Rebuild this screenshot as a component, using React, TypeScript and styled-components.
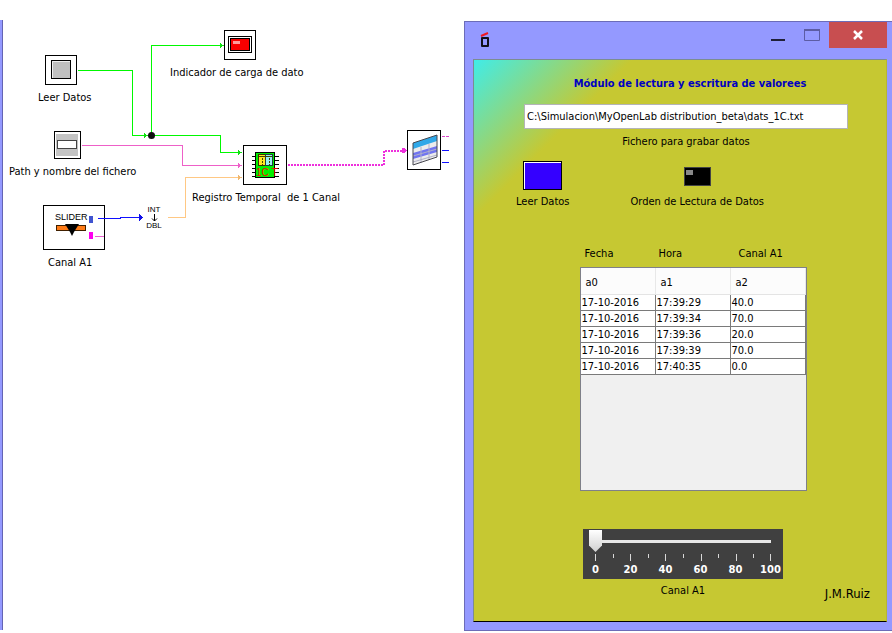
import React, { useState } from "react";
import styled, { createGlobalStyle } from "styled-components";

const GlobalStyle = createGlobalStyle`
  * { box-sizing: border-box; }
  body {
    margin: 0;
    background: #fff;
    color: #000;
    font-family: "DejaVu Sans Condensed", "Noto Sans", sans-serif;
    font-size: 11px;
    line-height: 16px;
  }
`;

const Page = styled.main`
  display: grid;
  grid-template-columns: minmax(464px, 1fr) minmax(428px, 48%);
  min-height: 100vh;
  overflow: hidden;
`;

/* ---------- circuit canvas ---------- */

const Canvas = styled.section`
  position: relative;
  display: flex;
  padding: 20px 0 3px;
`;

const FrameEdge = styled.div`
  width: 3px;
  background: #9499ff;
  border-right: 1px solid #6464b4;
`;

const Wires = styled.svg`
  position: absolute;
  left: 0;
  top: 0;
  display: block;
`;

const Block = styled.div<{ $x: number; $y: number; $w: number; $h: number }>`
  position: absolute;
  left: ${(p) => p.$x}px;
  top: ${(p) => p.$y}px;
  width: ${(p) => p.$w}px;
  height: ${(p) => p.$h}px;
  border: 1px solid #000;
  background: #fff;

  svg { display: block; }
`;

const BlockLabel = styled.div<{ $x: number; $y: number }>`
  position: absolute;
  left: ${(p) => p.$x}px;
  top: ${(p) => p.$y}px;
  white-space: pre;
`;

const Converter = styled.div`
  position: absolute;
  left: 144px;
  top: 206px;
  width: 20px;
  display: flex;
  flex-direction: column;
  align-items: center;
  font-family: "Liberation Sans", sans-serif;
  font-size: 8px;
  line-height: 8px;
`;

const SliderWord = styled.span`
  position: absolute;
  left: 11px;
  top: 6px;
  font-family: "Liberation Sans", sans-serif;
  font-size: 9px;
  line-height: 10px;
`;

/* ---------- front panel window ---------- */

const Window = styled.section`
  margin: 21px 0 2px;
  border: solid #6c6cb8;
  border-width: 1px 0 1px 1px;
  background: #9499ff;
  padding: 0 5px 8px 8px;
  display: flex;
  flex-direction: column;
`;

const TitleBar = styled.header`
  display: flex;
  align-items: flex-start;
  height: 37px;
  padding-left: 7px;

  > svg { margin-top: 9px; }
`;

const TitleButtons = styled.div`
  display: flex;
  margin-left: auto;
`;

const TitleButton = styled.button<{ $close?: boolean }>`
  display: flex;
  align-items: center;
  justify-content: center;
  width: ${(p) => (p.$close ? 58 : 34)}px;
  height: 26px;
  padding: 0;
  border: 0;
  background: ${(p) => (p.$close ? "#c84e50" : "transparent")};
`;

const Form = styled.form`
  flex: 1;
  display: flex;
  flex-direction: column;
  align-items: center;
  padding: 16px 16px 18px 28px;
  border: 1px solid;
  border-color: #7c8c90 #b8b830 #000 #7c8c90;
  background: linear-gradient(135deg, #40ece8 0, #c6c832 112px);
`;

const Heading = styled.h1`
  margin: 0 0 12px 8px;
  font-size: 11px;
  line-height: 16px;
  color: #0000c0;
`;

const PathInput = styled.input`
  width: 88%;
  height: 25px;
  padding: 0 2px;
  border: 1px solid #b4b4b8;
  background: #fff;
  color: #000;
  font: inherit;
`;

const Caption = styled.label`
  display: block;
  text-align: center;
  white-space: nowrap;
`;

const PathCaption = styled(Caption)`
  margin-top: 5px;
`;

const Controls = styled.div`
  display: flex;
  align-self: stretch;
  gap: 61px;
  margin-top: 11px;
  padding-left: 14px;
`;

const Control = styled.div`
  display: flex;
  flex-direction: column;
  align-items: center;
  justify-content: flex-end;
  gap: 4px;
`;

const PushButton = styled.button`
  width: 39px;
  height: 29px;
  padding: 0;
  border: 1px solid #000;
  background: #3400ff;
  box-shadow: inset 1px 1px 0 #fff;
`;

const Led = styled.div`
  width: 27px;
  height: 19px;
  margin-bottom: 4px;
  border: 1px solid #444;
  background: #000;
`;

const Record = styled.div`
  width: 227px;
  margin: 36px 0 38px 14px;
`;

const ColumnNames = styled.div`
  display: grid;
  grid-template-columns: 74px 80px 1fr;
  padding-left: 5px;
  margin-bottom: 5px;
`;

const TableFrame = styled.div`
  height: 224px;
  border: 1px solid #7f8088;
  background: #f0f0f0;
`;

const Table = styled.table`
  width: 100%;
  table-layout: fixed;
  border-collapse: separate;
  border-spacing: 0;
  background: #fff;

  th {
    height: 27px;
    padding: 3px 5px 0;
    border-right: 1px solid #e8e8e8;
    border-bottom: 1px solid #e4e4e4;
    background: #fcfcfc;
    text-align: left;
    font-weight: normal;
  }

  td {
    height: 16px;
    padding: 0 0 0 1px;
    border-right: 1px solid #7a7a7a;
    border-bottom: 1px solid #7a7a7a;
    line-height: 15px;
  }
`;

const SliderPanel = styled.div`
  width: 200px;
  height: 50px;
  margin-right: 6px;
  background: #404040;
`;

const Range = styled.input`
  appearance: none;
  display: block;
  width: 188px;
  height: 24px;
  margin: 0 0 0 6px;
  background: linear-gradient(#e8e8e8, #e8e8e8) 6px 11px / 176px 3px no-repeat;

  &::-webkit-slider-thumb {
    appearance: none;
    width: 13px;
    height: 22px;
    background: linear-gradient(#fff, #d0d0d0);
    clip-path: polygon(0 0, 100% 0, 100% 70%, 50% 100%, 0 70%);
  }
`;

const Scale = styled.svg`
  display: block;
`;

const ScaleNumbers = styled.div`
  display: grid;
  grid-template-columns: repeat(6, 35px);
  margin-left: -5px;
  color: #fff;
  text-align: center;
  font-family: "DejaVu Sans", sans-serif;
  font-size: 10px;
  font-weight: bold;
  line-height: 16px;
`;

const SliderCaption = styled(Caption)`
  margin: 4px 6px 0 0;
`;

const Author = styled.div`
  align-self: flex-end;
  margin-top: -13px;
  font-size: 13px;
  line-height: 16px;
`;

const rows = [
  ["17-10-2016", "17:39:29", "40.0"],
  ["17-10-2016", "17:39:34", "70.0"],
  ["17-10-2016", "17:39:36", "20.0"],
  ["17-10-2016", "17:39:39", "70.0"],
  ["17-10-2016", "17:40:35", "0.0"],
];

const pinRows = [8, 12, 16, 20, 24, 28];

function Diagram() {
  return (
    <Canvas aria-label="Circuito">
      <FrameEdge />
      <Wires width="464" height="280" viewBox="0 0 464 280" fill="none" shapeRendering="crispEdges">
        <g stroke="#00f800">
          <path d="M78 70.500H132.500V135.500H220.500V152.500H242" />
          <path d="M151.500 135V45.500H224" />
        </g>
        <path d="M144 133v5l4-2.500zM220 43v5l4-2.500zM238 150v5l4-2.500z" fill="#10e010" />
        <path d="M82 145.500H182.500V165.500H242" stroke="#ee60c8" />
        <path d="M238 163v5l4-2.500z" fill="#ee60c8" />
        <path d="M168 217.500H185.500V177.500H242" stroke="#ffc884" />
        <path d="M238 175v5l4-2.500z" fill="#f0b870" />
        <path d="M288 165H384V151H402" stroke="#ee30dc" strokeWidth="2" strokeDasharray="2 1" />
        <path d="M402 148h2l3 2v1l-3 2h-2z" fill="#ee30dc" />
        <path d="M442 136.500h7" stroke="#d848c8" strokeDasharray="3 1" />
        <path d="M442 150.500h7M442 162.500h7" stroke="#1010ff" />
        <circle cx="151.500" cy="135.500" r="3.500" fill="#101010" shapeRendering="auto" />
      </Wires>

      <Block $x={45} $y={55} $w={32} $h={30}>
        <svg width="30" height="28">
          <rect x="5.500" y="4.500" width="19" height="18" fill="#c0c0c0" stroke="#000" />
          <path d="M6.500 22V5.500H24" fill="none" stroke="#f0f0f0" />
        </svg>
      </Block>
      <BlockLabel $x={38} $y={90}>Leer Datos</BlockLabel>

      <Block $x={224} $y={30} $w={32} $h={30}>
        <svg width="30" height="28">
          <rect x="3.500" y="5.500" width="23" height="16" stroke="#000" fill="#fff" />
          <rect x="5.500" y="7.500" width="19" height="12" stroke="#000" fill="#f80000" />
          <rect x="8" y="10" width="7" height="3" fill="#ff9c9c" />
        </svg>
      </Block>
      <BlockLabel $x={170} $y={65}>Indicador de carga de dato</BlockLabel>

      <Block $x={54} $y={131} $w={27} $h={28}>
        <svg width="25" height="26">
          <rect x="1" y="2" width="22" height="22" fill="#c4c4c4" />
          <rect x="2.500" y="8.500" width="19" height="8" fill="#fff" stroke="#444" />
        </svg>
      </Block>
      <BlockLabel $x={9} $y={164}>Path y nombre del fichero</BlockLabel>

      <Block $x={43} $y={205} $w={62} $h={45}>
        <svg width="60" height="43">
          <rect x="12.500" y="19.500" width="29" height="5" fill="#ff7c18" stroke="#402000" />
          <path d="M21 18h14l-5 8-2 4-2-4z" fill="#000" />
          <rect x="45" y="10" width="4" height="7" fill="#4054d0" />
          <rect x="45" y="26" width="4" height="7" fill="#ff00f0" />
          <path d="M51 30.500h9" stroke="#e860d0" />
        </svg>
        <SliderWord>SLIDER</SliderWord>
      </Block>
      <Wires width="150" height="280" viewBox="0 0 150 280" shapeRendering="crispEdges">
        <path d="M98 218.500H120V217.500H140" fill="none" stroke="#1010ff" />
        <path d="M139 214v7l4-3.500z" fill="#1010e8" />
      </Wires>
      <BlockLabel $x={48} $y={255}>Canal A1</BlockLabel>

      <Converter>
        <span>INT</span>
        <svg width="7" height="8">
          <path d="M3.500 0V7M1 4.500L3.500 7 6 4.500" fill="none" stroke="#000" />
        </svg>
        <span>DBL</span>
      </Converter>

      <Block $x={243} $y={145} $w={44} $h={40}>
        <svg width="42" height="38" shapeRendering="crispEdges">
          {pinRows.map((y) => (
            <path key={y} d={`M8 ${y + 2}.500h4M31 ${y + 2}.500h4`} stroke="#000" />
          ))}
          <rect x="11.500" y="6.500" width="19" height="25" fill="#00f000" stroke="#000" />
          <rect x="14.500" y="8.500" width="7" height="11" fill="#ffe820" stroke="#403000" />
          <rect x="21.500" y="8.500" width="7" height="11" fill="#98f0f0" stroke="#204040" />
          <path d="M15 10.500h13" stroke="#404000" />
          <path d="M18.500 12v7M25.500 12v7" stroke="#404000" strokeDasharray="2 1" />
          <text x="12" y="30" fontFamily="Liberation Sans" fontSize="10" fill="#ff0000">1C T</text>
        </svg>
      </Block>
      <BlockLabel $x={192} $y={190}>{"Registro Temporal  de 1 Canal"}</BlockLabel>

      <Block $x={407} $y={130} $w={34} $h={40}>
        <svg width="32" height="38">
          <path d="M5 12L29 4V26L5 34Z" fill="#ececec" />
          <path d="M5 12L29 4v6L5 18Z" fill="#30a8e8" />
          <path d="M5 22l24-7v6L5 28Z" fill="#7074f0" />
          <path d="M5 25l24-7M5 31l24-7M13 16v16M21 13v16" stroke="#b0b0c8" fill="none" />
          <path d="M5 12L29 4V26L5 34Z" fill="none" stroke="#484850" />
        </svg>
      </Block>
    </Canvas>
  );
}

export default function App() {
  const [path, setPath] = useState("C:\\Simulacion\\MyOpenLab distribution_beta\\dats_1C.txt");
  const [level, setLevel] = useState(0);

  return (
    <Page>
      <GlobalStyle />
      <Diagram />
      <Window>
        <TitleBar>
          <svg width="11" height="18" fill="none">
            <path d="M1 5L8 2" stroke="#f01820" strokeWidth="2" />
            <path d="M2 7H8V15H2Z" stroke="#101018" strokeWidth="2" strokeLinejoin="round" />
          </svg>
          <TitleButtons>
            <TitleButton type="button" aria-label="Minimizar">
              <svg width="16" height="16"><path d="M1 13h14" stroke="#202038" strokeWidth="2" /></svg>
            </TitleButton>
            <TitleButton type="button" aria-label="Maximizar">
              <svg width="16" height="14" fill="none" stroke="#5c5ca4">
                <path d="M.5 2.500v10h15v-10" />
                <path d="M0 2h16" strokeWidth="2" />
              </svg>
            </TitleButton>
            <TitleButton type="button" aria-label="Cerrar" $close>
              <svg width="12" height="10"><path d="M2 1l8 8M10 1l-8 8" stroke="#fff" strokeWidth="2.500" /></svg>
            </TitleButton>
          </TitleButtons>
        </TitleBar>

        <Form onSubmit={(e) => e.preventDefault()}>
          <Heading>Módulo de lectura y escritura de valorees</Heading>
          <PathInput id="path" value={path} onChange={(e) => setPath(e.target.value)} />
          <PathCaption htmlFor="path">Fichero para grabar datos</PathCaption>

          <Controls>
            <Control>
              <PushButton id="read" type="button" />
              <Caption htmlFor="read">Leer Datos</Caption>
            </Control>
            <Control>
              <Led>
                <svg width="25" height="17"><rect x="1" y="2" width="7" height="5" fill="#888" /></svg>
              </Led>
              <Caption as="span">Orden de Lectura de Datos</Caption>
            </Control>
          </Controls>

          <Record>
            <ColumnNames>
              <span>Fecha</span>
              <span>Hora</span>
              <span>Canal A1</span>
            </ColumnNames>
            <TableFrame>
              <Table>
                <thead>
                  <tr><th>a0</th><th>a1</th><th>a2</th></tr>
                </thead>
                <tbody>
                  {rows.map((r) => (
                    <tr key={r[1]}>{r.map((c) => <td key={c}>{c}</td>)}</tr>
                  ))}
                </tbody>
              </Table>
            </TableFrame>
          </Record>

          <SliderPanel>
            <Range
              id="canal"
              type="range"
              min={0}
              max={100}
              value={level}
              onChange={(e) => setLevel(Number(e.target.value))}
            />
            <Scale width="200" height="9" stroke="#d8d8d8" shapeRendering="crispEdges">
              {[12, 47, 82, 118, 153, 187].map((x) => <path key={x} d={`M${x}.500 1v7`} />)}
              {[30, 65, 100, 135, 170].map((x) => <path key={x} d={`M${x}.500 1v4`} />)}
            </Scale>
            <ScaleNumbers>
              {[0, 20, 40, 60, 80, 100].map((n) => <span key={n}>{n}</span>)}
            </ScaleNumbers>
          </SliderPanel>
          <SliderCaption htmlFor="canal">Canal A1</SliderCaption>
          <Author>J.M.Ruiz</Author>
        </Form>
      </Window>
    </Page>
  );
}
